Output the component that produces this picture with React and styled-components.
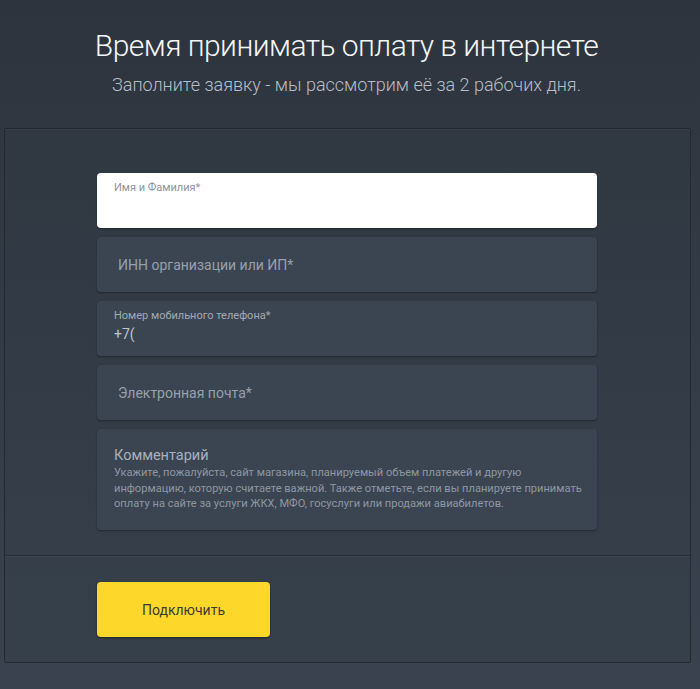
import React from 'react'
import styled, { createGlobalStyle } from 'styled-components'

const Global = createGlobalStyle`
html, body { margin:0; padding:0; }
body {
  width:700px;
  height:689px;
  overflow:hidden;
  background:linear-gradient(180deg,#2d343e 0%,#323a45 40%,#39424e 100%);
  font-family:Roboto,"Liberation Sans",sans-serif;
}
`;

const Page = styled.div`
width:700px;
height:689px;
display:flex;
flex-direction:column;
align-items:center;
padding:28px 7px 0 0;
box-sizing:border-box;
`;
const Title = styled.h1`
margin:0;
font-weight:300;
font-size:30px;
line-height:36px;
color:#f4f5f7;
letter-spacing:-0.55px;
`;
const Subtitle = styled.p`
margin:9px 0 0;
font-weight:300;
font-size:18px;
line-height:24px;
color:#b8bec7;
`;
const Panel = styled.div`
margin-top:31px;
margin-left:2px;
width:687px;
height:535px;
box-sizing:border-box;
border:1px solid #222931;
border-radius:2px;
background:linear-gradient(180deg,#303842 0%,#36404b 100%);
box-shadow:inset 0 1px 0 rgba(255,255,255,0.04);
display:flex;
flex-direction:column;
`;
const Fields = styled.div`
height:427px;
box-sizing:border-box;
padding:44px 0 0 92px;
display:flex;
flex-direction:column;
gap:9px;
border-bottom:1px solid #272e37;
box-shadow:0 1px 0 rgba(255,255,255,0.04);
`;
const Field = styled.div`
width:500px;
height:${({tall})=>(tall?'101px':'55px')};
box-sizing:border-box;
border-radius:4px;
background:${({active})=>(active?'#ffffff':'#3b4552')};
box-shadow:0 1px 2px rgba(0,0,0,0.35);
padding:${({big})=>(big?'0 21px':'8px 17px 0')};
display:flex;
flex-direction:column;
justify-content:${({big})=>(big?'center':'flex-start')};
`;
const Label = styled.span`
font-size:11px;
line-height:14px;
color:${({active})=>(active?'#8f949b':'#a3aab4')};
`;
const Value = styled.span`
font-size:14px;
line-height:18px;
color:#bfc5cd;
margin-top:2px;
`;
const Placeholder = styled.span`
font-size:14px;
color:#97a0ab;
`;
const CommentTitle = styled.span`
font-size:14.5px;
line-height:18px;
color:#a9b0ba;
margin-top:10px;
`;
const CommentHint = styled.span`
font-size:11.1px;
line-height:15.5px;
color:#8e96a1;
white-space:nowrap;
`;
const Footer = styled.div`
flex:1;
padding:26px 0 0 92px;
`;
const Button = styled.button`
width:173px;
height:55px;
border:none;
border-radius:4px;
background:#fdd82a;
box-shadow:0 1px 2px rgba(0,0,0,0.4);
font-family:Roboto,"Liberation Sans",sans-serif;
font-size:14px;
color:#3a3a33;
cursor:pointer;
`;

const App = () => {
    return (
        <>
            <Global/>
            <Page>
                <Title>Время принимать оплату в интернете</Title>
                <Subtitle>Заполните заявку - мы рассмотрим её за 2 рабочих дня.</Subtitle>
                <Panel>
                    <Fields>
                        <Field active>
                            <Label active>Имя и Фамилия*</Label>
                        </Field>
                        <Field big>
                            <Placeholder>ИНН организации или ИП*</Placeholder>
                        </Field>
                        <Field>
                            <Label>Номер мобильного телефона*</Label>
                            <Value>+7(</Value>
                        </Field>
                        <Field big>
                            <Placeholder>Электронная почта*</Placeholder>
                        </Field>
                        <Field tall>
                            <CommentTitle>Комментарий</CommentTitle>
                            <CommentHint>
                                Укажите, пожалуйста, сайт магазина, планируемый объем платежей и другую<br/>
                                информацию, которую считаете важной. Также отметьте, если вы планируете принимать<br/>
                                оплату на сайте за услуги ЖКХ, МФО, госуслуги или продажи авиабилетов.
                            </CommentHint>
                        </Field>
                    </Fields>
                    <Footer>
                        <Button>Подключить</Button>
                    </Footer>
                </Panel>
            </Page>
        </>
    )
}

export default App
